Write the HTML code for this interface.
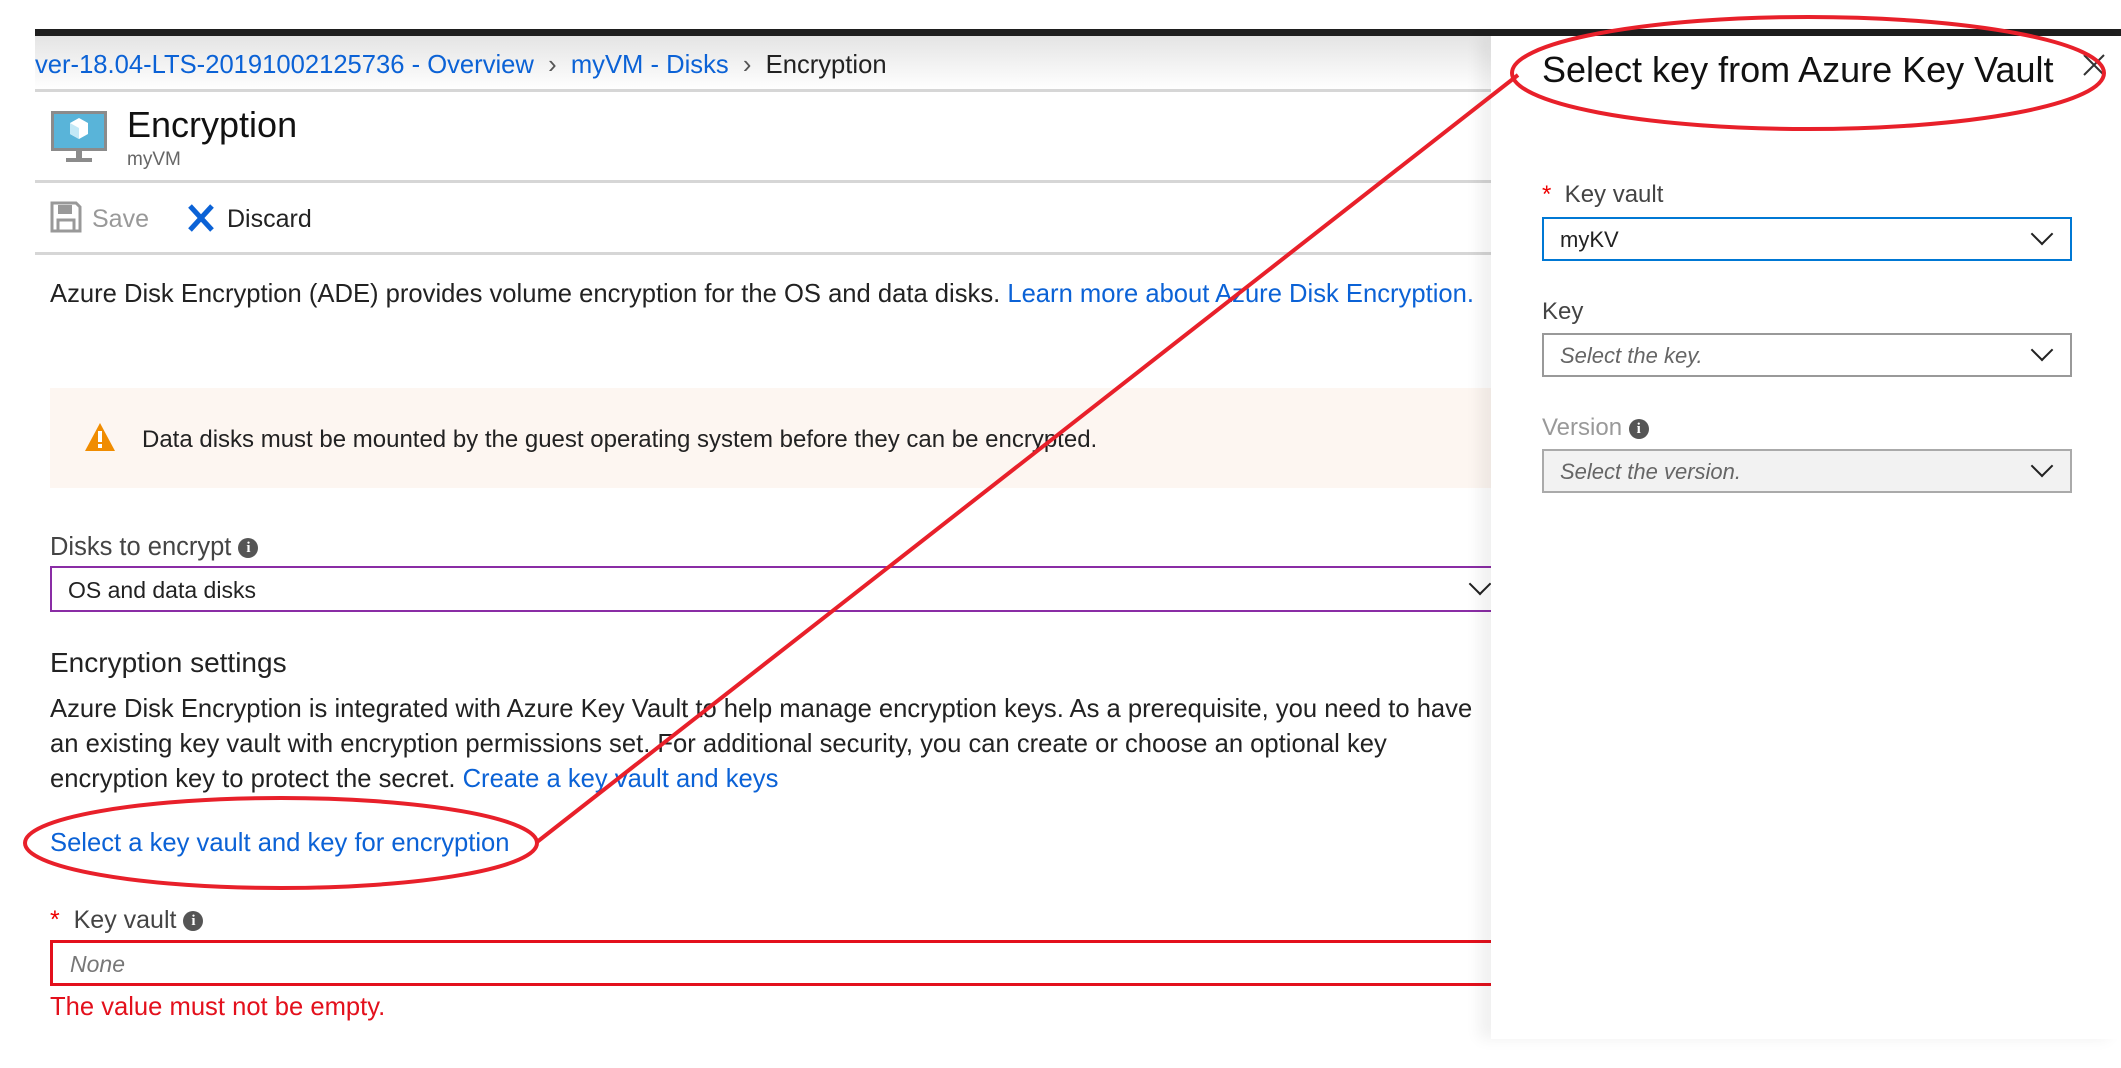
<!DOCTYPE html>
<html><head><meta charset="utf-8"><style>
*{margin:0;padding:0;box-sizing:border-box}
body{width:2121px;height:1068px;background:#fff;position:relative;overflow:hidden;font-family:"Liberation Sans",sans-serif;color:#222}
.a{position:absolute;white-space:nowrap}
.blue{color:#0b62d6}
.hr{position:absolute;left:35px;width:1460px;height:3px;background:#d6d6d6}
.info{display:inline-block;width:20px;height:20px;border-radius:50%;background:#555;color:#fff;font-size:15px;font-weight:bold;text-align:center;line-height:20px;font-family:"Liberation Serif",serif;vertical-align:middle}
.chev{position:absolute;width:16px;height:16px;border-right:2.5px solid #222;border-bottom:2.5px solid #222;transform:rotate(45deg)}
</style></head><body>
<div class="a" style="left:35px;top:29px;width:2086px;height:7px;background:#1e1e1e"></div>
<div class="a" style="left:35px;top:36px;width:2086px;height:54px;background:linear-gradient(#e4e4e4,#fff)"></div>
<div class="a" style="left:35px;top:50px;font-size:25.6px;line-height:30px"><span class="blue">ver-18.04-LTS-20191002125736 - Overview</span><span style="color:#555"> &nbsp;›&nbsp; </span><span class="blue">myVM - Disks</span><span style="color:#555"> &nbsp;›&nbsp; </span>Encryption</div>
<div class="hr" style="top:89px"></div>
<svg class="a" style="left:50px;top:110px" width="58" height="54" viewBox="0 0 58 54"><rect x="1" y="1" width="56" height="40" fill="#8b8b8b"/><rect x="4" y="4" width="50" height="34" fill="#59b4d9"/><path d="M29 8l9 5v11l-9 5-9-5V13z" fill="#fff"/><path d="M29 18v11l-9-5V13z" fill="#c3e8f6"/><rect x="26" y="41" width="6" height="7" fill="#8b8b8b"/><rect x="16" y="48" width="26" height="4" fill="#8b8b8b"/></svg>
<div class="a" style="left:127px;top:104px;font-size:36px;line-height:42px;color:#111">Encryption</div>
<div class="a" style="left:127px;top:148px;font-size:19px;line-height:24px;color:#666">myVM</div>
<div class="hr" style="top:180px"></div>
<svg class="a" style="left:50px;top:201px" width="32" height="32" viewBox="0 0 32 32"><path d="M2 2h24l4 4v24H2z" fill="none" stroke="#999" stroke-width="3"/><rect x="8" y="4" width="14" height="9" fill="#999"/><rect x="8" y="19" width="16" height="11" fill="none" stroke="#999" stroke-width="3"/></svg>
<div class="a" style="left:92px;top:204px;font-size:25px;line-height:30px;color:#999">Save</div>
<svg class="a" style="left:186px;top:203px" width="30" height="30" viewBox="0 0 30 30"><path d="M4 3l22 24M26 3L4 27" stroke="#0b62d6" stroke-width="5"/></svg>
<div class="a" style="left:227px;top:204px;font-size:25px;line-height:30px">Discard</div>
<div class="hr" style="top:252px"></div>
<div class="a" style="left:50px;top:279px;font-size:25.6px;line-height:30px">Azure Disk Encryption (ADE) provides volume encryption for the OS and data disks. <span class="blue">Learn more about Azure Disk Encryption.</span></div>
<div class="a" style="left:50px;top:388px;width:1445px;height:100px;background:#fdf6f1"></div>
<svg class="a" style="left:84px;top:422px" width="32" height="30" viewBox="0 0 32 30"><path d="M16 1L31 29H1z" fill="#f08c00"/><rect x="14" y="9" width="4" height="11" fill="#fff"/><rect x="14" y="22" width="4" height="4" fill="#fff"/></svg>
<div class="a" style="left:142px;top:426px;font-size:24px;line-height:28px">Data disks must be mounted by the guest operating system before they can be encrypted.</div>
<div class="a" style="left:50px;top:532px;font-size:25.5px;line-height:30px;color:#444">Disks to encrypt <span class="info">i</span></div>
<div class="a" style="left:50px;top:566px;width:1460px;height:46px;border:2px solid #8a2da5;border-right:none"></div>
<div class="a" style="left:68px;top:576px;font-size:23px;line-height:28px">OS and data disks</div>
<div class="chev" style="left:1472px;top:576px;border-color:#222"></div>
<div class="a" style="left:50px;top:646px;font-size:28px;line-height:34px">Encryption settings</div>
<div class="a" style="left:50px;top:692px;font-size:25.6px;line-height:35px">Azure Disk Encryption is integrated with Azure Key Vault to help manage encryption keys. As a prerequisite, you need to have<br>an existing key vault with encryption permissions set. For additional security, you can create or choose an optional key<br>encryption key to protect the secret. <span class="blue">Create a key vault and keys</span></div>
<div class="a blue" style="left:50px;top:828px;font-size:25.6px;line-height:30px">Select a key vault and key for encryption</div>
<div class="a" style="left:50px;top:905px;font-size:25px;line-height:30px;color:#444"><span style="color:#e00">*</span>&nbsp; Key vault <span class="info">i</span></div>
<div class="a" style="left:50px;top:940px;width:1460px;height:46px;border:3px solid #e3101c;border-right:none"></div>
<div class="a" style="left:70px;top:950px;font-size:23px;line-height:28px;color:#777;font-style:italic">None</div>
<div class="a" style="left:50px;top:992px;font-size:25.6px;line-height:30px;color:#e3101c">The value must not be empty.</div>

<!-- right panel -->
<div class="a" style="left:1491px;top:36px;width:630px;height:1003px;background:#fff;box-shadow:-12px 0 14px rgba(0,0,0,0.06)"></div>
<div class="a" style="left:1542px;top:48px;font-size:36px;line-height:44px;color:#111">Select key from Azure Key Vault</div>
<svg class="a" style="left:2082px;top:53px" width="24" height="24" viewBox="0 0 24 24"><path d="M2 2l20 20M22 2L2 22" stroke="#333" stroke-width="2"/></svg>
<div class="a" style="left:1542px;top:180px;font-size:24px;line-height:30px;color:#444"><span style="color:#e00">*</span>&nbsp; Key vault</div>
<div class="a" style="left:1542px;top:217px;width:530px;height:44px;border:2px solid #0078d4"></div>
<div class="a" style="left:1560px;top:226px;font-size:22px;line-height:28px">myKV</div>
<div class="chev" style="left:2034px;top:226px"></div>
<div class="a" style="left:1542px;top:297px;font-size:24px;line-height:30px;color:#444">Key</div>
<div class="a" style="left:1542px;top:333px;width:530px;height:44px;border:2px solid #999"></div>
<div class="a" style="left:1560px;top:342px;font-size:22px;line-height:28px;color:#666;font-style:italic">Select the key.</div>
<div class="chev" style="left:2034px;top:342px"></div>
<div class="a" style="left:1542px;top:413px;font-size:24px;line-height:30px;color:#999">Version <span class="info" style="background:#555">i</span></div>
<div class="a" style="left:1542px;top:449px;width:530px;height:44px;border:2px solid #aaa;background:#f2f2f2"></div>
<div class="a" style="left:1560px;top:458px;font-size:22px;line-height:28px;color:#666;font-style:italic">Select the version.</div>
<div class="chev" style="left:2034px;top:458px"></div>

<!-- annotations -->
<svg class="a" style="left:0;top:0" width="2121" height="1068" viewBox="0 0 2121 1068">
<g fill="none" stroke="#e8202a" stroke-width="4">
<ellipse cx="1808" cy="73" rx="296" ry="56"/>
<ellipse cx="281" cy="843" rx="256" ry="45"/>
<path d="M537 842L1518 75"/>
</g></svg>
</body></html>
